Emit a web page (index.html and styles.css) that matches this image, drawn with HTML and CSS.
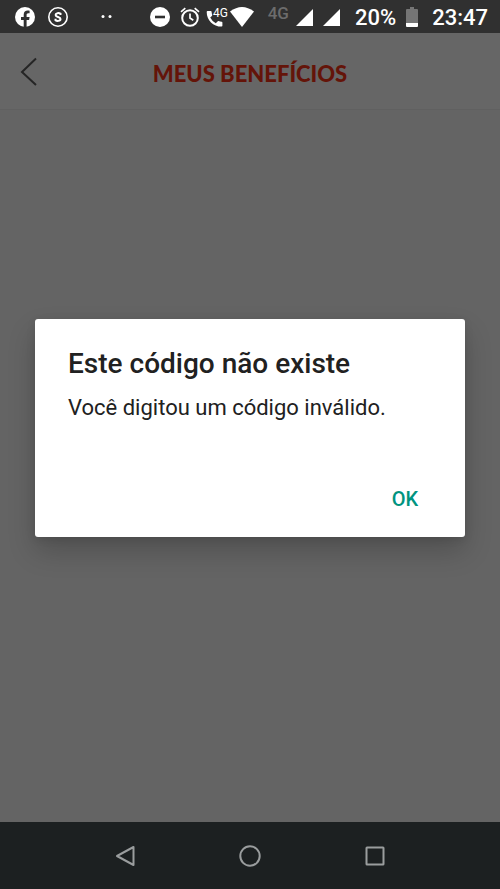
FILE: index.html
```html
<!DOCTYPE html>
<html lang="pt-BR">
<head>
<meta charset="utf-8">
<meta name="viewport" content="width=device-width, initial-scale=1">
<title>Meus Benefícios</title>
<link rel="stylesheet" href="styles.css">
</head>
<body>
<div class="status">
  <div class="group notices">
    <svg width="20" height="20" viewBox="0 0 20 20"><circle cx="10" cy="10" r="10" fill="#fff"/><path d="M8.700 20v-7H6v-3h2.700V7.800C8.700 5 10.300 3.600 12.700 3.600c.8 0 1.500.1 1.900.2v2.500h-1.300c-1.300 0-1.700.8-1.700 1.600V10h3l-.5 3h-2.500v7z" fill="#303030"/></svg>
    <svg width="20" height="20" viewBox="0 0 20 20" fill="none" stroke="#fff"><circle cx="10" cy="10" r="9.200" stroke-width="1.600"/><path d="M12.500 8V6.600C11 5.800 7.600 5.700 7.600 8c0 2.300 4.900 1.600 4.900 4 0 2.400-3.900 2.200-5 1.200V11.700" stroke-width="2"/></svg>
    <svg class="dots" width="12" height="20" viewBox="0 0 12 20" fill="#fff"><circle cx="2" cy="9.500" r="1.500"/><circle cx="9" cy="9.500" r="1.500"/></svg>
  </div>
  <div class="group system">
    <svg width="20" height="20" viewBox="0 0 20 20"><circle cx="10" cy="10" r="10" fill="#fff"/><path d="M5 10h10" stroke="#303030" stroke-width="2.600"/></svg>
    <svg width="20" height="20" viewBox="0 0 20 20" fill="none" stroke="#fff" stroke-width="2"><circle cx="10" cy="11" r="7.800"/><path d="M10 6.500V11l3.300 2.200M1 4.800l4.300-3.600M19 4.800l-4.300-3.600" stroke-width="1.700"/></svg>
    <svg class="call" width="22" height="20" viewBox="0 0 22 20" fill="#fff"><path d="M1.500 4h3.300q.7 0 .8.800.1 1.600.6 3 .2.600-.3 1.100L4.200 10.600q2 4 5.600 5.600l1.700-1.800q.5-.5 1.100-.3 1.400.5 3 .6.800.1.800.8v3.300q0 .8-.8.800C7.200 19.600.7 13 .7 4.900q0-.9.800-.9z"/><text class="mini" x="7" y="10">4G</text></svg>
    <svg class="wifi" width="24" height="20" viewBox="0 0 24 20" fill="#fff"><path d="M0 4.500Q12-4.500 24 4.500L12 20z"/></svg>
    <span class="network">4G</span>
    <svg width="17" height="20" viewBox="0 0 17 20" fill="#fff"><path d="M17 2v17H0z"/></svg>
    <svg width="17" height="20" viewBox="0 0 17 20" fill="#fff"><path d="M17 2v17H0z"/></svg>
    <span class="charge">20%</span>
    <svg width="12" height="20" viewBox="0 0 12 20"><path d="M4 0h4v2h3q1 0 1 1v13H0V3q0-1 1-1h3z" fill="#757575"/><path d="M0 16h12v3q0 1-1 1H1q-1 0-1-1z" fill="#fff"/></svg>
    <time>23:47</time>
  </div>
</div>
<div class="app">
  <header>
    <button class="back" aria-label="Voltar"><svg width="18" height="30" viewBox="0 0 18 30" fill="none" stroke="#252525" stroke-width="2"><path d="M16 2.500L2 16l14 13"/></svg></button>
    <h1>MEUS BENEFÍCIOS</h1>
  </header>
  <div class="overlay">
    <div class="dialog" role="alertdialog" aria-modal="true" aria-labelledby="title" aria-describedby="message">
      <h2 id="title">Este código não existe</h2>
      <p id="message">Você digitou um código inválido.</p>
      <div class="actions"><button class="ok">OK</button></div>
    </div>
  </div>
</div>
<nav>
  <button aria-label="Voltar"><svg width="24" height="24" viewBox="0 0 24 24"><path d="M20.500 3v18L4 12z"/></svg></button>
  <button aria-label="Início"><svg width="24" height="24" viewBox="0 0 24 24"><circle cx="12" cy="12" r="9.700"/></svg></button>
  <button aria-label="Recentes"><svg width="24" height="24" viewBox="0 0 24 24"><rect x="3.500" y="3.500" width="17" height="17" rx=".5"/></svg></button>
</nav>
</body>
</html>
```
FILE: styles.css
```css
* { box-sizing: border-box; }
body {
  margin: 0;
  min-height: 100vh;
  display: flex;
  flex-direction: column;
  background: #646464;
  font-family: Roboto, "Liberation Sans", sans-serif;
}
h1, h2, p { margin: 0; }
svg { display: block; flex: none; }
button {
  padding: 0;
  border: 0;
  background: none;
  font-family: inherit;
}
.status {
  height: 33px;
  padding: 1px 12px 0 15px;
  display: flex;
  justify-content: space-between;
  align-items: center;
  background: #303030;
  color: #fff;
  font-size: 22px;
  font-weight: 500;
}
.group { display: flex; align-items: center; }
.notices { gap: 13px; }
.dots { margin-left: 20px; }
.system { gap: 10px; }
.call { margin-left: -4px; }
.wifi { margin-left: -8px; }
.mini { font-size: 12px; font-weight: 400; }
.network {
  margin: 0 -3px 8px 4px;
  color: #6c6c6c;
  font-size: 17px;
  line-height: 20px;
}
.charge { margin-left: 5px; }
time { margin-left: 4px; }
.app {
  flex: 1;
  position: relative;
}
header {
  height: 77px;
  padding: 0 20px;
  display: grid;
  grid-template-columns: 1fr auto 1fr;
  align-items: center;
  background: #666;
  border-bottom: 1px solid #606060;
}
.back { justify-self: start; }
h1 {
  padding-top: 6px;
  color: #641409;
  font: 900 22px/28px Lato, sans-serif;
}
.overlay {
  position: absolute;
  inset: 0;
  padding: 0 35px;
  display: flex;
  align-items: center;
}
.dialog {
  flex: 1;
  padding: 26px 33px 12px;
  background: #fff;
  border-radius: 3px;
  box-shadow: 0 14px 28px rgba(0, 0, 0, .2), 0 2px 8px rgba(0, 0, 0, .1);
  color: #212121;
}
h2 {
  font-size: 28px;
  font-weight: 500;
  line-height: 38px;
}
p {
  margin-top: 10px;
  font-size: 22px;
  line-height: 30px;
}
.actions {
  margin-top: 50px;
  display: flex;
  justify-content: flex-end;
}
.ok {
  min-width: 54px;
  height: 52px;
  color: #009480;
  font-size: 20px;
  font-weight: 500;
}
nav {
  height: 67px;
  padding: 0 62px;
  display: flex;
  background: #1c2021;
}
nav button {
  flex: 1;
  display: grid;
  place-items: center;
}
nav svg {
  fill: none;
  stroke: #9a9d9e;
  stroke-width: 2;
  stroke-linejoin: round;
}
```
